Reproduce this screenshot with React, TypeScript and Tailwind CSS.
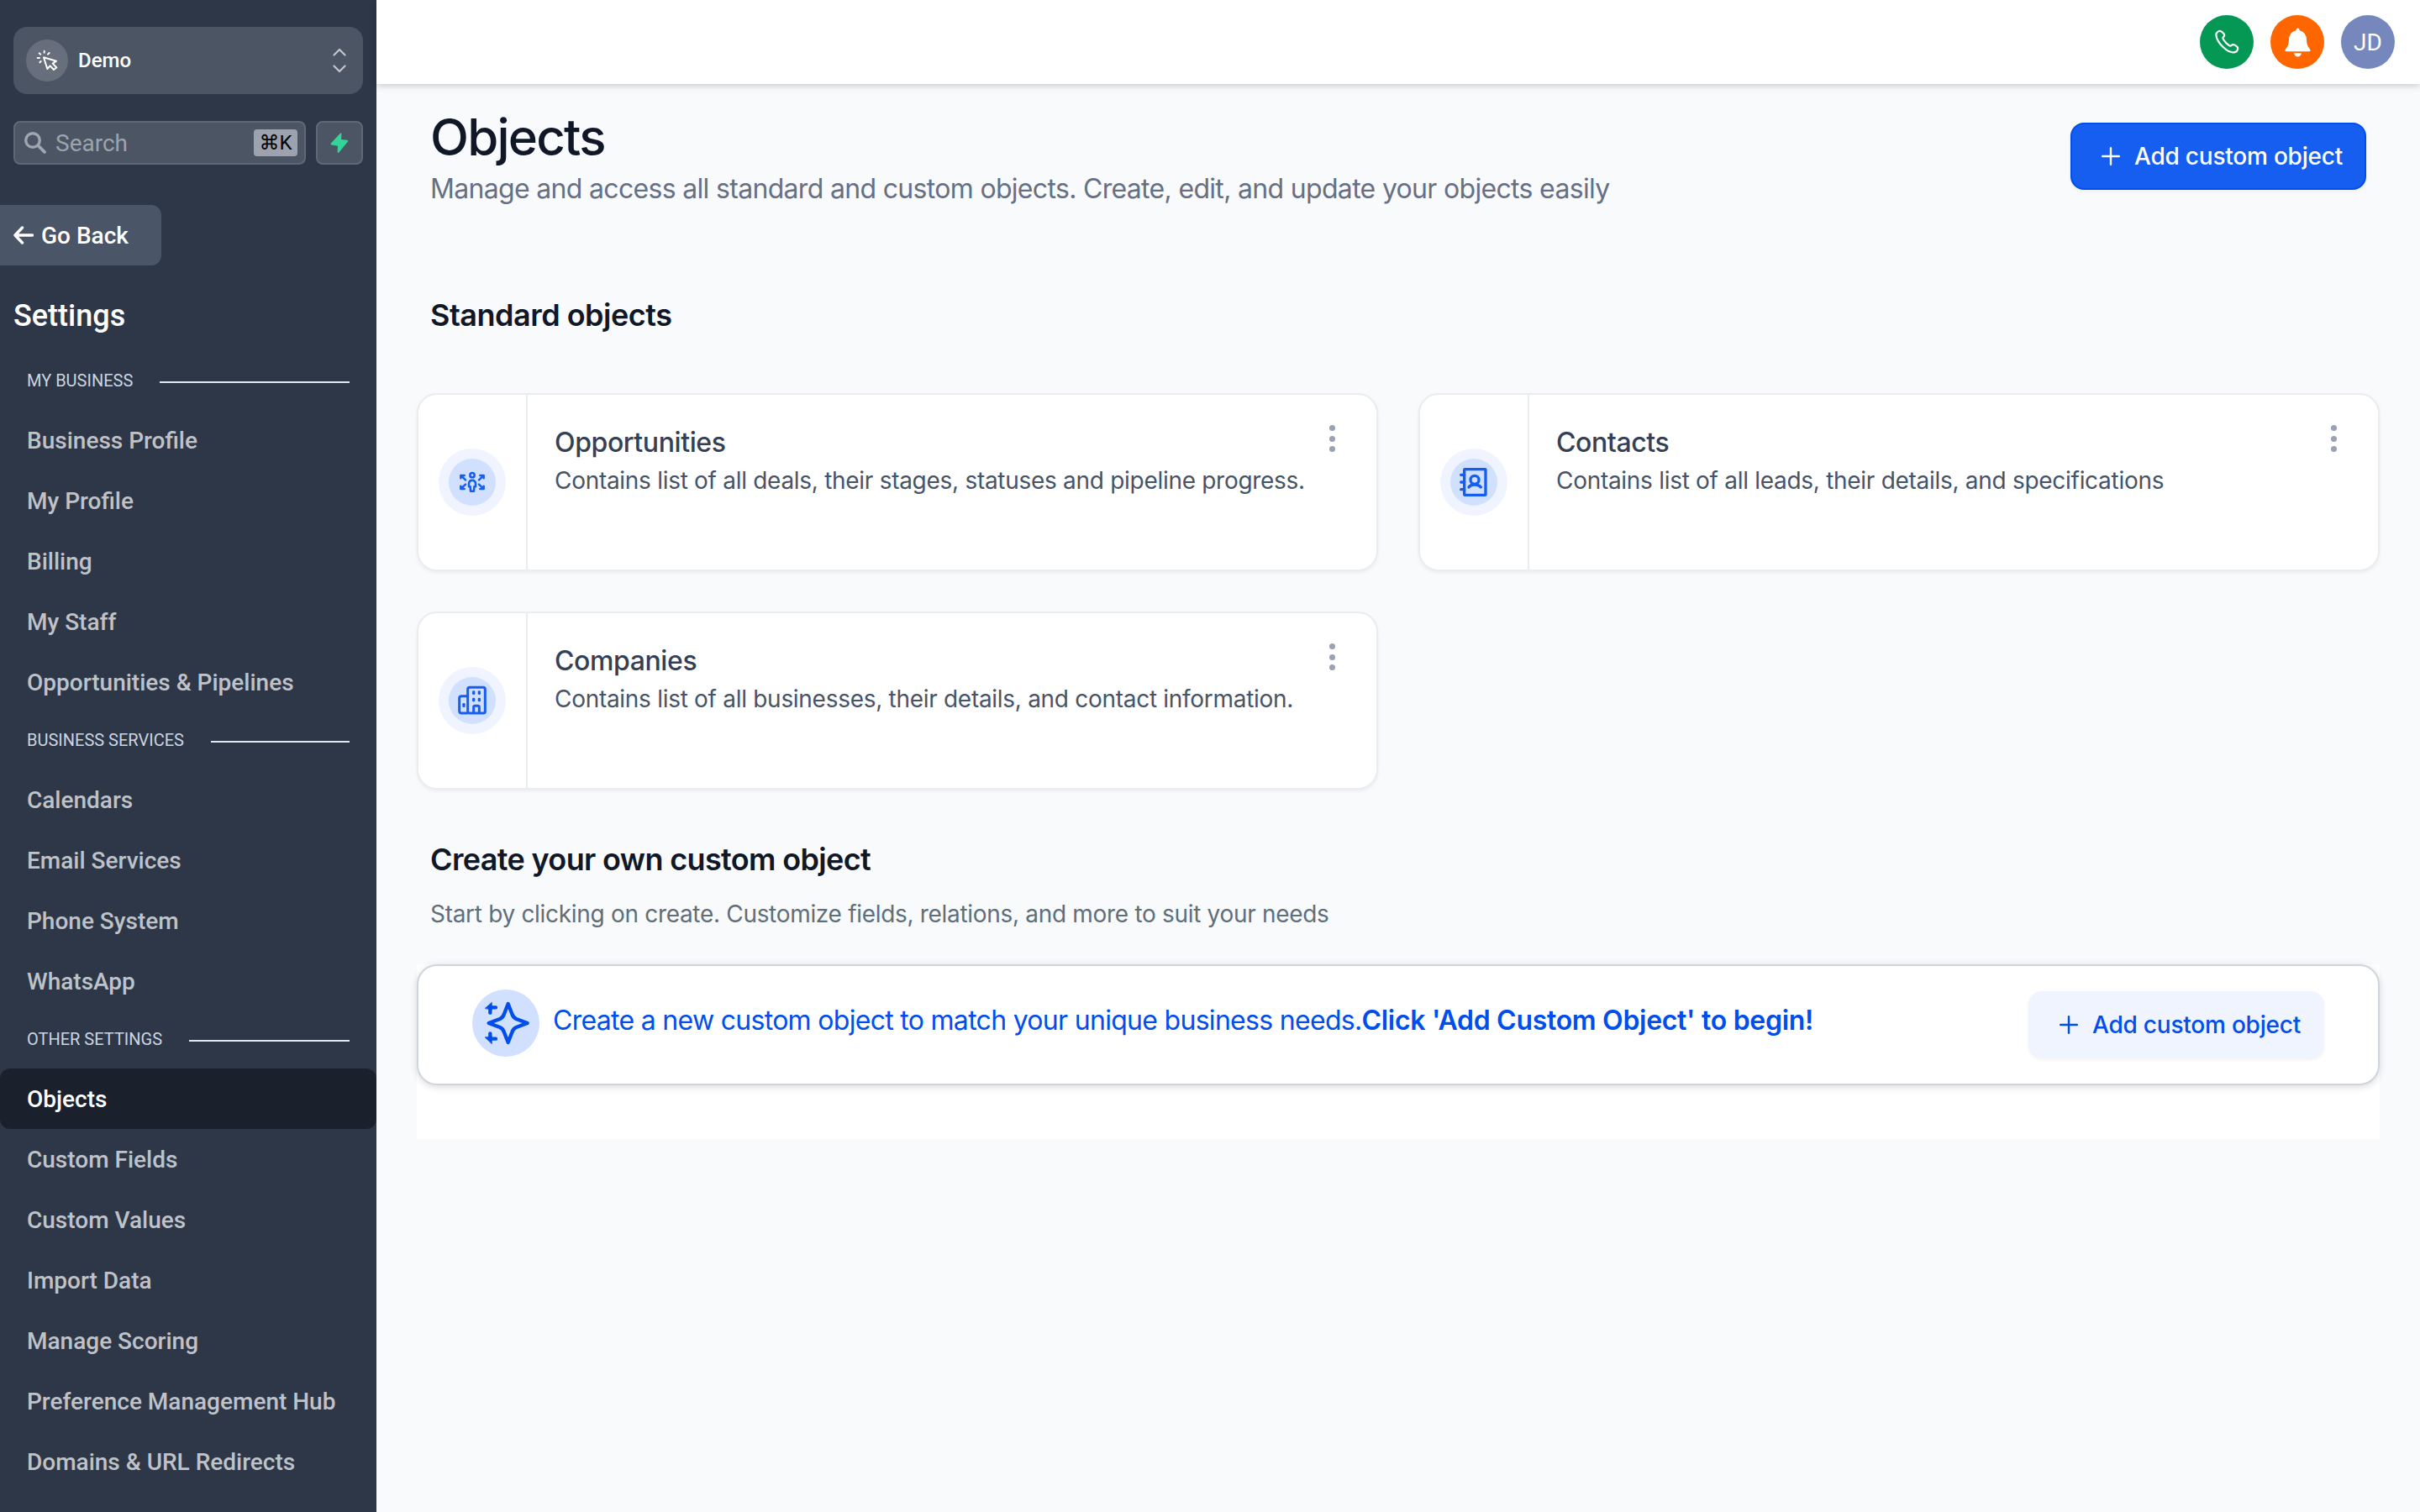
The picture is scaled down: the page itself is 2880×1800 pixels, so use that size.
import type { ReactNode } from 'react';
import { clsx } from 'clsx';

interface NavGroup {
  title: string;
  items: string[];
}

interface ObjectCardProps {
  name: string;
  description: string;
  icon: ReactNode;
}

const NAV_GROUPS: NavGroup[] = [
  {
    title: 'MY BUSINESS',
    items: [
      'Business Profile',
      'My Profile',
      'Billing',
      'My Staff',
      'Opportunities & Pipelines',
    ],
  },
  {
    title: 'BUSINESS SERVICES',
    items: ['Calendars', 'Email Services', 'Phone System', 'WhatsApp'],
  },
  {
    title: 'OTHER SETTINGS',
    items: [
      'Objects',
      'Custom Fields',
      'Custom Values',
      'Import Data',
      'Manage Scoring',
      'Preference Management Hub',
      'Domains & URL Redirects',
    ],
  },
];

const ACTIVE_ITEM = 'Objects';

function CursorClickIcon() {
  return (
    <svg
      viewBox="129 177 78 78"
      className="w-[26px] h-[26px]"
      fill="none"
      stroke="white"
      strokeWidth="6"
      strokeLinecap="round"
      strokeLinejoin="round"
      aria-hidden="true"
    >
      <path d="M156 205L201 218L188 227L202 241L192 249L179 235L169 246Z" />
      <path d="M158 182V188M140 190L145 194M176 189L171 194M134 207H141M146 219L142 223" />
    </svg>
  );
}

function ChevronUpDown() {
  return (
    <svg
      viewBox="0 0 16 30"
      className="w-4 h-[30px]"
      fill="none"
      stroke="#c3c7cd"
      strokeWidth="2.2"
      strokeLinecap="round"
      strokeLinejoin="round"
      aria-hidden="true"
    >
      <path d="M1.5 8.5L8 2L14.5 8.5M1.5 21.5L8 28L14.5 21.5" />
    </svg>
  );
}

function SearchIcon() {
  return (
    <svg
      viewBox="0 0 26 26"
      className="w-[26px] h-[26px]"
      fill="none"
      stroke="#a0a6b0"
      strokeWidth="3.4"
      strokeLinecap="round"
      aria-hidden="true"
    >
      <circle cx="10" cy="10" r="8.3" />
      <path d="M16.2 16.2L24 24" strokeWidth="3.8" />
    </svg>
  );
}

function BoltIcon() {
  return (
    <svg viewBox="0 0 22 24" className="w-[22px] h-6" aria-hidden="true">
      <path
        d="M12.2 .6L.9 12.6Q0 14 1.6 14.6L9 15.8L8.6 23Q9 24.4 10.4 23.6L21 10.6Q21.8 9.2 20.2 8.8L13 8L13.4 1Q13.2 0 12.2 .6Z"
        fill="#34d399"
      />
    </svg>
  );
}

function ArrowLeftIcon() {
  return (
    <svg
      viewBox="0 0 24 22"
      className="w-6 h-[22px]"
      fill="none"
      stroke="white"
      strokeWidth="3.4"
      strokeLinecap="round"
      strokeLinejoin="round"
      aria-hidden="true"
    >
      <path d="M10.5 2L2 11L10.5 20M2.5 11H22.5" />
    </svg>
  );
}

function PhoneIcon() {
  return (
    <svg
      viewBox="645 105 90 90"
      className="w-[30px] h-[30px]"
      fill="none"
      stroke="white"
      strokeWidth="6.5"
      strokeLinejoin="round"
      aria-hidden="true"
    >
      <path d="M652 124Q653 116 660 112Q667 108 673 114L679 120Q684 126 679 131Q674 135 678 141Q686 154 698 162Q703 166 707 162Q712 157 719 161L726 166Q732 172 728 179Q723 188 712 187Q696 186 677 168Q653 145 652 124Z" />
    </svg>
  );
}

function BellIcon() {
  return (
    <svg
      viewBox="890 95 105 105"
      className="w-[35px] h-[35px]"
      fill="white"
      aria-hidden="true"
    >
      <path d="M942.500 96Q949 97 949 105Q974 111 974 140Q975 160 985 170Q992 180 982 180H903Q893 180 900 170Q910 160 911 140Q911 111 936 105Q936 97 942.500 96Z" />
      <path d="M929 186H956Q953 198.500 942.500 198.500Q932 198.500 929 186Z" />
    </svg>
  );
}

function PlusIcon() {
  return (
    <svg
      viewBox="0 0 22 22"
      className="w-[22px] h-[22px]"
      fill="none"
      stroke="currentColor"
      strokeWidth="2.4"
      strokeLinecap="round"
      aria-hidden="true"
    >
      <path d="M11 1.2V20.8M1.2 11H20.8" />
    </svg>
  );
}

function OpportunitiesIcon() {
  return (
    <svg
      viewBox="66 66 120 120"
      className="w-10 h-10"
      fill="none"
      stroke="#155eef"
      strokeWidth="7.5"
      strokeLinecap="round"
      strokeLinejoin="round"
      aria-hidden="true"
    >
      <circle cx="126" cy="101" r="8" />
      <path d="M120 158H132L133 142H138V130Q137 119 126 119Q115 119 114 130V142H119Z" />
      <path d="M85 112V102H98M87 104L102 118M167 112V102H154M165 104L150 118" />
      <path d="M85 140V150H98M87 148L102 134M167 140V150H154M165 148L150 134" />
    </svg>
  );
}

function ContactsIcon() {
  return (
    <svg
      viewBox="-60 -60 120 120"
      className="w-10 h-10"
      fill="none"
      stroke="#155eef"
      strokeWidth="10"
      strokeLinecap="round"
      strokeLinejoin="round"
      aria-hidden="true"
    >
      <rect x="-34" y="-46" width="76" height="92" rx="2" />
      <path d="M-46 -26H-34M-46 0H-34M-46 26H-34" />
      <circle cx="3" cy="-8" r="15" />
      <path d="M-18 18Q-12 9 3 9Q18 9 25 18" />
    </svg>
  );
}

function CompaniesIcon() {
  return (
    <svg
      viewBox="66 846 120 120"
      className="w-10 h-10"
      fill="none"
      stroke="#155eef"
      strokeWidth="9"
      strokeLinejoin="round"
      aria-hidden="true"
    >
      <rect x="110" y="859" width="62" height="92" rx="7" />
      <path d="M110 890H88Q80 890 80 898V943Q80 951 88 951H110" />
      <path d="M131 951V930Q131 925 136 925H146Q151 925 151 930V951" />
      <g fill="#155eef" stroke="none">
        <rect x="126" y="871" width="10" height="14" rx="4" />
        <rect x="146" y="871" width="10" height="14" rx="4" />
        <rect x="126" y="896" width="10" height="14" rx="4" />
        <rect x="146" y="896" width="10" height="14" rx="4" />
        <rect x="91" y="915" width="10" height="15" rx="4" />
      </g>
    </svg>
  );
}

function SparklesIcon() {
  return (
    <svg
      viewBox="42 42 180 180"
      className="w-[60px] h-[60px]"
      fill="none"
      stroke="#004eeb"
      strokeLinecap="round"
      strokeLinejoin="round"
      aria-hidden="true"
    >
      <path
        d="M140 63L154 99Q158 112 169 117L209 132L169 147Q158 152 154 165L140 201L126 165Q122 152 111 147L71 132L111 117Q122 112 126 99Z"
        strokeWidth="13"
      />
      <path d="M76 95V76H96M76 169V188H96" strokeWidth="13" />
      <path
        d="M58 79L82 58V84ZM58 183L82 206V180Z"
        fill="#004eeb"
        strokeWidth="2"
      />
    </svg>
  );
}

function Sidebar() {
  return (
    <aside className="w-[448px] h-full shrink-0 bg-[#2d3748] pt-8 font-[Roboto,sans-serif]">
      <div className="mx-4 h-20 rounded-2xl bg-[#4c5563] pl-[15px] pr-5 flex items-center">
        <div className="w-[50px] h-[50px] rounded-full bg-[#676f7c] flex items-center justify-center">
          <CursorClickIcon />
        </div>
        <span className="ml-3 text-2xl font-medium text-white">Demo</span>
        <span className="ml-auto">
          <ChevronUpDown />
        </span>
      </div>

      <div className="mx-4 mt-8 flex gap-3">
        <div className="w-[348px] h-[52px] rounded-lg border-2 border-[#606876] bg-[#4c5563] pl-[11px] pr-2 flex items-center">
          <SearchIcon />
          <span className="ml-[11px] mt-0.5 text-[28px] leading-8 text-[#9ca3af]">
            Search
          </span>
          <kbd className="ml-auto w-[52px] h-8 rounded bg-[#9ca3af] flex items-center justify-center font-[Roboto,'DejaVu_Sans',sans-serif] text-2xl leading-8 text-black">
            ⌘K
          </kbd>
        </div>
        <button
          className="w-14 h-[52px] rounded-lg border-2 border-[#606876] bg-[#4c5563] flex items-center justify-center"
          aria-label="Quick actions"
        >
          <BoltIcon />
        </button>
      </div>

      <button className="mt-12 w-48 h-[72px] pl-4 rounded-r-xl bg-[#4a5568] flex items-center gap-[9px] text-[28px] font-medium text-white">
        <ArrowLeftIcon />
        <span className="mt-0.5">Go Back</span>
      </button>

      <h2 className="mt-9 ml-4 h-12 leading-[48px] text-4xl font-medium text-white">
        Settings
      </h2>

      <nav className="mt-5">
        {NAV_GROUPS.map((group) => (
          <div key={group.title}>
            <div className="h-[68px] pl-8 pr-8 flex items-center gap-8">
              <span className="mb-0.5 text-xl text-[#cbd5e0] whitespace-nowrap">
                {group.title}
              </span>
              <span className="flex-1 h-0.5 mt-0.5 bg-[#e2e8f0]" />
            </div>
            {group.items.map((item) => (
              <a
                key={item}
                className={clsx(
                  'h-[72px] pl-8 pt-0.5 flex items-center text-[28px] font-medium',
                  item === ACTIVE_ITEM
                    ? 'rounded-xl bg-[#1a202c] text-white'
                    : 'text-[#bfc2c7]'
                )}
              >
                {item}
              </a>
            ))}
          </div>
        ))}
      </nav>
    </aside>
  );
}

function TopBar() {
  return (
    <header className="relative h-[100px] shrink-0 bg-white pr-[30px] flex items-center justify-end gap-5 shadow-[0_2px_8px_rgba(0,0,0,0.2)]">
      <button
        className="w-16 h-16 rounded-full bg-[#059855] flex items-center justify-center"
        aria-label="Phone"
      >
        <PhoneIcon />
      </button>
      <button
        className="w-16 h-16 rounded-full bg-[#ff6600] flex items-center justify-center"
        aria-label="Notifications"
      >
        <BellIcon />
      </button>
      <div className="w-16 h-16 pt-0.5 rounded-full bg-[#7587bd] flex items-center justify-center font-[Roboto,sans-serif] text-[28px] text-white">
        JD
      </div>
    </header>
  );
}

function ObjectCard({ name, description, icon }: ObjectCardProps) {
  return (
    <div className="h-[212px] rounded-3xl border-2 border-[#eaecf0] bg-white flex shadow-[0_2px_4px_rgba(16,24,40,0.06)]">
      <div className="w-[130px] border-r-2 border-[#eaecf0] flex items-center justify-center">
        <div className="w-20 h-20 rounded-full bg-[#eff4ff] flex items-center justify-center">
          <div className="w-14 h-14 rounded-full bg-[#d1e0ff] flex items-center justify-center">
            {icon}
          </div>
        </div>
      </div>
      <div className="flex-1 pt-[35px] pl-8">
        <h3 className="text-[32px] leading-[44px] font-medium tracking-[-0.4px] text-[#344054]">
          {name}
        </h3>
        <p className="text-[28px] leading-[46px] tracking-[-0.29px] text-[#475467]">
          {description}
        </p>
      </div>
      <button
        className="h-8 mt-9 mr-[49px] flex flex-col items-center justify-between"
        aria-label={`${name} options`}
      >
        <span className="w-[7px] h-[7px] rounded-full bg-[#98a2b3]" />
        <span className="w-[7px] h-[7px] rounded-full bg-[#98a2b3]" />
        <span className="w-[7px] h-[7px] rounded-full bg-[#98a2b3]" />
      </button>
    </div>
  );
}

function AddButton({ className }: { className: string }) {
  return (
    <button
      className={clsx(
        'w-[352px] h-20 shrink-0 rounded-2xl border-2 pl-[35px] flex items-center gap-[17px] text-[28px] font-medium tracking-[-0.22px] whitespace-nowrap shadow-[0_2px_4px_rgba(16,24,40,0.05)]',
        className
      )}
    >
      <PlusIcon />
      Add custom object
    </button>
  );
}

export default function App() {
  return (
    <div className="w-[2880px] h-[1800px] overflow-hidden flex bg-[#f9fafb]">
      <Sidebar />
      <div className="flex-1 flex flex-col bg-[#f9fafc] font-[Inter,sans-serif]">
        <TopBar />
        <main className="px-12 pt-[27px]">
          <div className="px-4 flex items-start justify-between">
            <div>
              <h1 className="text-[60px] leading-[72px] font-medium tracking-[-1.8px] text-[#101828]">
                Objects
              </h1>
              <p className="mt-1.5 text-[32px] leading-10 tracking-[-0.68px] text-[#667085]">
                Manage and access all standard and custom objects. Create, edit,
                and update your objects easily
              </p>
            </div>
            <AddButton className="mt-[19px] border-[#004eeb] bg-[#155eef] text-white" />
          </div>

          <h2 className="mt-[108px] px-4 text-4xl leading-[44px] font-semibold tracking-[-0.5px] text-[#101828]">
            Standard objects
          </h2>
          <div className="mt-[71px] grid grid-cols-2 gap-12">
            <ObjectCard
              name="Opportunities"
              description="Contains list of all deals, their stages, statuses and pipeline progress."
              icon={<OpportunitiesIcon />}
            />
            <ObjectCard
              name="Contacts"
              description="Contains list of all leads, their details, and specifications"
              icon={<ContactsIcon />}
            />
            <ObjectCard
              name="Companies"
              description="Contains list of all businesses, their details, and contact information."
              icon={<CompaniesIcon />}
            />
          </div>

          <h2 className="mt-[61px] px-4 text-4xl leading-[44px] font-semibold tracking-[-0.65px] text-[#101828]">
            Create your own custom object
          </h2>
          <p className="mt-[23px] px-4 text-[28px] leading-10 tracking-[-0.31px] text-[#5f6f7a]">
            Start by clicking on create. Customize fields, relations, and more to
            suit your needs
          </p>

          <div className="mt-10 h-[208px] bg-white">
            <div className="h-36 rounded-3xl border-2 border-[#d0d5dd] bg-white pl-16 pr-16 flex items-center shadow-[0_2px_8px_rgba(0,0,0,0.15)]">
              <div className="w-20 h-20 mt-[-4px] shrink-0 rounded-full bg-[#d1e0ff] flex items-center justify-center">
                <SparklesIcon />
              </div>
              <p className="ml-4 mt-[-11px] text-[32px] leading-10 tracking-[-0.7px] text-[#004eeb] whitespace-nowrap">
                Create a new custom object to match your unique business needs.
                <span className="font-semibold tracking-[-0.3px]">
                  Click 'Add Custom Object' to begin!
                </span>
              </p>
              <AddButton className="ml-auto border-[#eff4ff] bg-[#eff4ff] text-[#004eeb]" />
            </div>
          </div>
        </main>
      </div>
    </div>
  );
}
